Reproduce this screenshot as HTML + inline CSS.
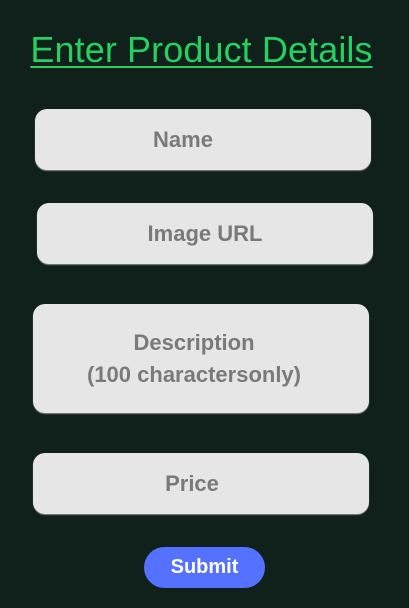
<!DOCTYPE html>
<html><head><style>
html,body{margin:0;padding:0;}
body{width:409px;height:608px;background:#10201a;position:relative;overflow:hidden;font-family:"Liberation Sans",sans-serif;}
h1{position:absolute;left:0;width:403px;top:29px;margin:0;text-align:center;font-weight:normal;font-size:36px;color:#25cf60;text-decoration:underline;text-decoration-thickness:2px;text-underline-offset:4px;letter-spacing:0.1px;}
.b{position:absolute;background:#e6e6e6;border-radius:12px;display:flex;align-items:center;justify-content:center;text-align:center;color:#7a7a7a;font-weight:bold;font-size:22px;line-height:32px;box-shadow:0 1px 1px #888;}
.s{position:absolute;left:144px;top:547px;width:121px;height:41px;border-radius:21px;background:#5571ff;color:#fff;font-weight:bold;font-size:20px;display:flex;align-items:center;justify-content:center;}
</style></head><body>
<h1>Enter Product Details</h1>
<div class="b" style="left:35px;top:109px;width:336px;height:61px;"><span style="margin-left:-40px">Name</span></div>
<div class="b" style="left:37px;top:203px;width:336px;height:61px;">Image URL</div>
<div class="b" style="left:33px;top:304px;width:336px;height:109px;"><span style="margin-left:-14px">Description<br>(100 charactersonly)</span></div>
<div class="b" style="left:33px;top:453px;width:336px;height:61px;"><span style="margin-left:-18px">Price</span></div>
<div class="s">Submit</div>
</body></html>
